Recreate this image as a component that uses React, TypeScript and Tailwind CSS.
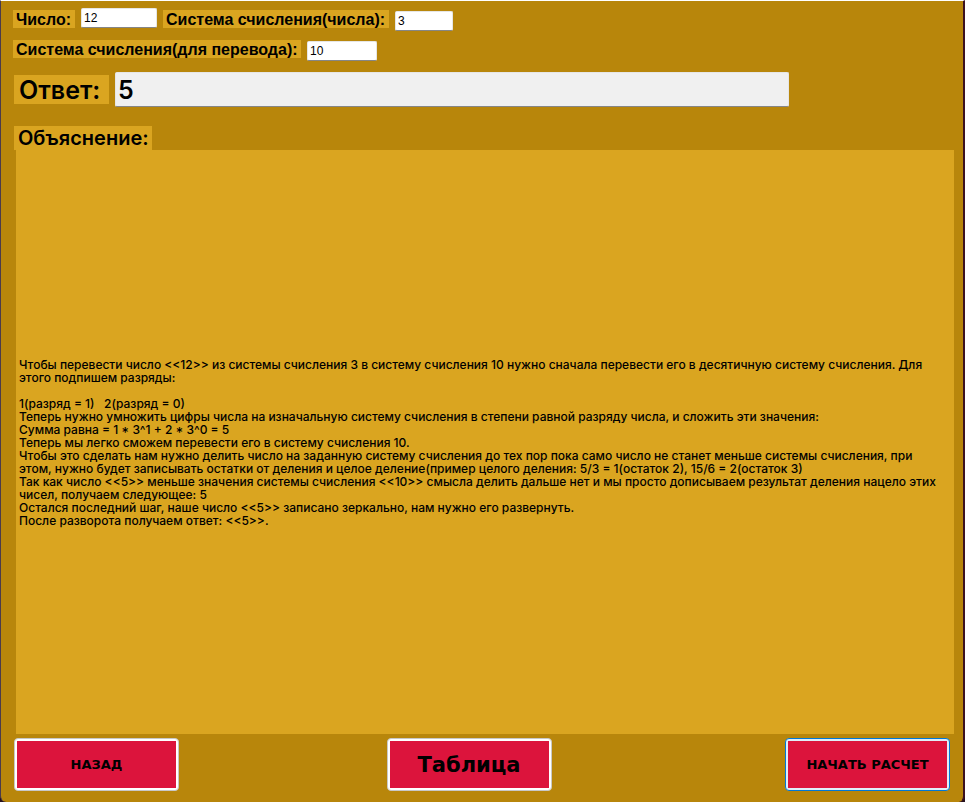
import { useState } from "react";

const EXPLANATION = [
  "Чтобы перевести число <<12>> из системы счисления 3 в систему счисления 10 нужно сначала перевести его в десятичную систему счисления. Для",
  "этого подпишем разряды:",
  "",
  "1(разряд = 1)   2(разряд = 0)",
  "Теперь нужно умножить цифры числа на изначальную систему счисления в степени равной разряду числа, и сложить эти значения:",
  "Сумма равна = 1 * 3^1 + 2 * 3^0 = 5",
  "Теперь мы легко сможем перевести его в систему счисления 10.",
  "Чтобы это сделать нам нужно делить число на заданную систему счисления до тех пор пока само число не станет меньше системы счисления, при",
  "этом, нужно будет записывать остатки от деления и целое деление(пример целого деления: 5/3 = 1(остаток 2), 15/6 = 2(остаток 3)",
  "Так как число <<5>> меньше значения системы счисления <<10>> смысла делить дальше нет и мы просто дописываем результат деления нацело этих",
  "чисел, получаем следующее: 5",
  "Остался последний шаг, наше число <<5>> записано зеркально, нам нужно его развернуть.",
  "После разворота получаем ответ: <<5>>.",
].join("\n");

const label =
  "bg-[#daa520] h-[18px] pl-[3px] text-[16px] leading-5 font-bold whitespace-nowrap font-['Liberation_Sans',Arial,sans-serif]";
const field =
  "h-5 rounded-[2px] border border-[#e6e6e6] border-b-[#868686] bg-white px-[2px] text-[12px] leading-4 outline-none font-['Liberation_Sans',Arial,sans-serif]";
const button =
  "h-[53px] w-[165px] rounded-[4px] border p-[2px] text-black font-bold font-['DejaVu_Sans',Verdana,sans-serif]";
const plain = "border-[#c8c8c8] bg-white";
const focused = "border-[#0078d7] bg-[#e0eef9]";
const face = "flex h-full items-center justify-center bg-[#dc143c]";

export default function App() {
  const [value, setValue] = useState("12");
  const [from, setFrom] = useState("3");
  const [to, setTo] = useState("10");

  return (
    <div className="min-h-screen bg-[#26101c]">
      <main className="flex min-h-screen flex-col rounded-b-[6px] border-t border-r-2 border-l border-t-white border-r-[#3c1220] border-l-[#4a3a4c] bg-[#b8860b] pr-[9px] pb-[11px] pl-3 text-black">
        <form className="pt-[7px]">
          <div className="flex items-start">
            <label htmlFor="value" className={`${label} mt-[2px] w-[62px]`}>Число:</label>
            <input
              id="value"
              value={value}
              onChange={(e) => setValue(e.target.value)}
              className={`${field} ml-[6px] w-[76px]`}
            />
            <label htmlFor="from" className={`${label} mt-[2px] ml-[6px] w-[226px]`}>
              Система счисления(числа):
            </label>
            <input
              id="from"
              value={from}
              onChange={(e) => setFrom(e.target.value)}
              className={`${field} mt-[3px] ml-[6px] w-[58px]`}
            />
          </div>
          <div className="mt-[9px] flex items-start">
            <label htmlFor="to" className={`${label} w-[288px]`}>
              Система счисления(для перевода):
            </label>
            <input
              id="to"
              value={to}
              onChange={(e) => setTo(e.target.value)}
              className={`${field} mt-px ml-[6px] w-[70px]`}
            />
          </div>
          <div className="mt-[11px] ml-px flex items-center">
            <label
              htmlFor="answer"
              className="h-[29px] w-[95px] bg-[#daa520] pl-[5px] font-['Inter',sans-serif] text-[25px] leading-[30px] font-semibold"
            >
              Ответ:
            </label>
            <input
              id="answer"
              readOnly
              value="5"
              className="mr-[165px] ml-[6px] h-[35px] min-w-0 flex-1 rounded-[2px] border border-[#e6e6e6] border-b-[#868686] bg-[#f0f0f0] px-[2px] font-['Inter',sans-serif] text-[25px] leading-[30px] font-semibold outline-none"
            />
          </div>
        </form>
        <section className="mt-[19px] flex flex-1 flex-col">
          <h2 className="ml-px h-6 w-[138px] bg-[#daa520] pl-1 font-['Inter',sans-serif] text-[20px] leading-6 font-semibold">
            Объяснение:
          </h2>
          <div className="ml-[3px] flex flex-1 items-center bg-[#daa520] pl-[3px]">
            <p className="font-['Inter',sans-serif] text-[12px] leading-[13px] font-medium whitespace-pre">
              {EXPLANATION}
            </p>
          </div>
        </section>
        <nav className="mt-[4px] mr-[4px] ml-px flex justify-between">
          <button type="button" className={`${button} ${plain}`}>
            <span className={`${face} text-[13px]`}>НАЗАД</span>
          </button>
          <button type="button" className={`${button} ${plain} mr-[26px]`}>
            <span className={`${face} pt-[2px] text-[21px]`}>Таблица</span>
          </button>
          <button type="button" className={`${button} ${focused}`}>
            <span className={`${face} text-[13px]`}>НАЧАТЬ РАСЧЕТ</span>
          </button>
        </nav>
      </main>
    </div>
  );
}
